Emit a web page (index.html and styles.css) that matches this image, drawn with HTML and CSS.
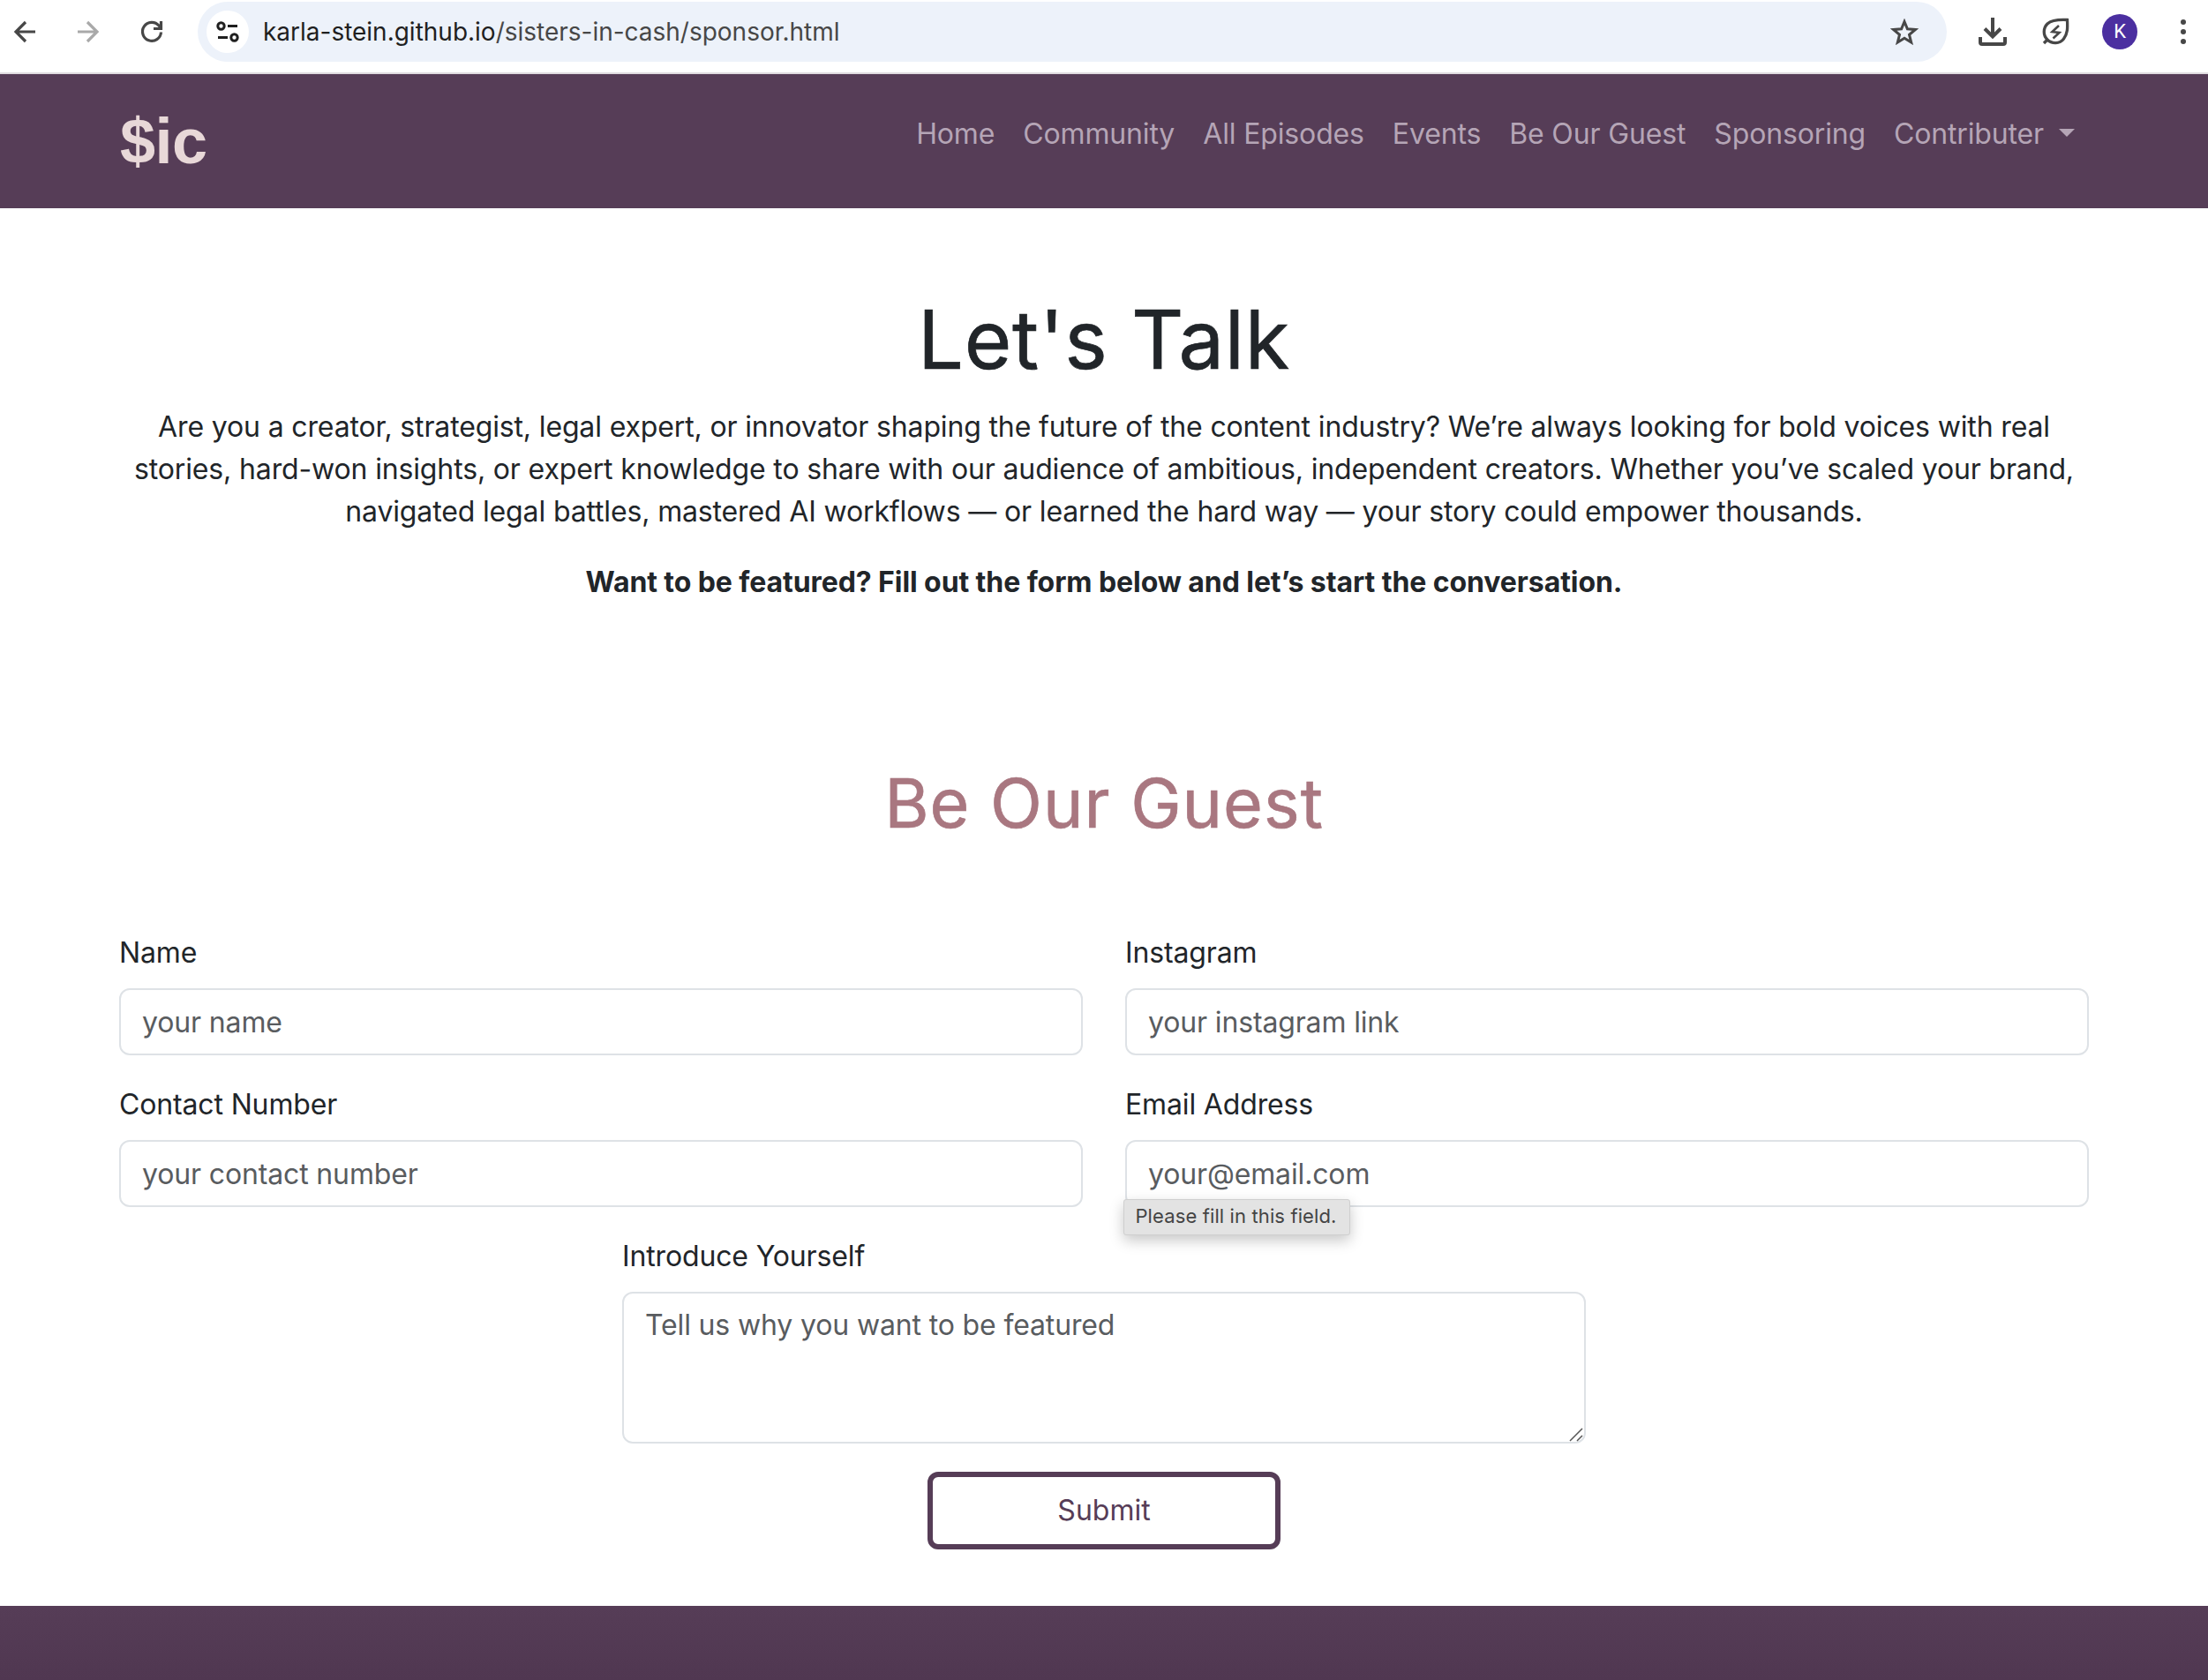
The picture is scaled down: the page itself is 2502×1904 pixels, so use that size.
FILE: index.html
```html
<!DOCTYPE html>
<html lang="en">
<head>
<meta charset="utf-8">
<title>Let's Talk</title>
<link rel="stylesheet" href="styles.css">
</head>
<body>
<div class="toolbar">
  <svg class="icon icon-back" viewBox="0 0 24 24"><path d="M24 12H2M13 1L2 12l11 11"/></svg>
  <svg class="icon icon-forward" viewBox="0 0 24 24"><path d="M0 12h22M11 1l11 11-11 11"/></svg>
  <svg class="icon icon-reload" viewBox="0 0 24 24"><path d="M22.500 12.500A10.500 10.500 0 1 1 20 5l2.500 3M22.500 0v8.500H14"/></svg>
  <div class="address">
    <div class="site-info">
      <svg viewBox="0 0 26 24"><circle cx="5.500" cy="5.500" r="3.700"/><path d="M13 5.500h11M2 18.500h11"/><circle cx="20.500" cy="18.500" r="3.700"/></svg>
    </div>
    <div class="url">karla-stein.github.io<span class="path">/sisters-in-cash/sponsor.html</span></div>
    <svg class="star" viewBox="0 0 32 30"><path d="M16 3.500l3.400 8.300 9 .7-6.900 5.800 2.200 8.700L16 22.300 8.300 27l2.200-8.700-6.900-5.800 9-.7z"/></svg>
  </div>
  <svg class="icon icon-download" viewBox="0 0 32 32"><path d="M16 0v21M7 12.500l9 9 9-9M2 22v6a2 2 0 0 0 2 2h24a2 2 0 0 0 2-2v-6"/></svg>
  <svg class="icon icon-leaf" viewBox="0 0 32 32"><path d="M2 29l4-4M6 25C1 20 1 12 6 7c5-4.500 13-5 22.500-4.500C29 12 29 18 24.500 24S11 30 6 25z"/><path class="bolt" d="M19 9l-7.500 7 8 1-7 6.500"/></svg>
  <div class="avatar">K</div>
  <svg class="dots" viewBox="0 0 6 28"><circle cx="3" cy="3" r="3"/><circle cx="3" cy="14" r="3"/><circle cx="3" cy="25" r="3"/></svg>
</div>
<header class="navbar">
  <div class="container navbar-inner">
    <a class="brand">$ic</a>
    <nav class="nav">
      <a>Home</a><a>Community</a><a>All Episodes</a><a>Events</a><a>Be Our Guest</a><a>Sponsoring</a><a class="dropdown">Contributer</a>
    </nav>
  </div>
</header>
<main class="container">
  <section class="intro">
    <h1>Let's Talk</h1>
    <p>Are you a creator, strategist, legal expert, or innovator shaping the future of the content industry? We’re always looking for bold voices with real<br>stories, hard-won insights, or expert knowledge to share with our audience of ambitious, independent creators. Whether you’ve scaled your brand,<br>navigated legal battles, mastered AI workflows — or learned the hard way — your story could empower thousands.</p>
    <p class="callout">Want to be featured? Fill out the form below and let’s start the conversation.</p>
  </section>
  <h2>Be Our Guest</h2>
  <form class="form">
    <div class="field"><label>Name</label><input type="text" placeholder="your name"></div>
    <div class="field"><label>Instagram</label><input type="text" placeholder="your instagram link"></div>
    <div class="field"><label>Contact Number</label><input type="text" placeholder="your contact number"></div>
    <div class="field"><label>Email Address</label><input type="text" placeholder="your@email.com"><div class="tooltip">Please fill in this field.</div></div>
    <div class="field field-center"><label>Introduce Yourself</label>
      <div class="textarea">Tell us why you want to be featured
        <svg class="grip" viewBox="0 0 16 16"><path d="M1 15L15 1M9 15l6-6"/></svg>
      </div>
    </div>
    <button class="submit" type="button">Submit</button>
  </form>
</main>
<footer class="footer"></footer>
</body>
</html>
```
FILE: styles.css
```css
* { box-sizing: border-box; }
body {
  margin: 0;
  height: 1904px;
  overflow: hidden;
  display: flex;
  flex-direction: column;
  background: #fff;
  color: #212529;
  font: 32px/48px Inter, "Liberation Sans", sans-serif;
  letter-spacing: -0.145px;
}
h1, h2, p { margin: 0; font-weight: 400; }

.toolbar {
  display: flex;
  align-items: center;
  height: 84px;
  padding: 0 25px 10px 16px;
  border-bottom: 2px solid #e0dce0;
  flex: none;
}
.icon {
  flex: none;
  width: 24px;
  height: 24px;
  fill: none;
  stroke: #474747;
  stroke-width: 3.2;
  overflow: visible;
}
.icon-forward { margin-left: 48px; stroke: #a9a9a9; }
.icon-reload { margin-left: 48px; }
.address {
  display: flex;
  align-items: center;
  flex: none;
  width: 1982px;
  height: 68px;
  margin: 0 0 0 40px;
  padding: 0 32px 0 10px;
  border-radius: 34px;
  background: #edf2fa;
}
.site-info {
  display: flex;
  align-items: center;
  justify-content: center;
  width: 48px;
  height: 48px;
  border-radius: 50%;
  background: #fff;
}
.site-info svg { width: 26px; height: 24px; fill: none; stroke: #1f1f1f; stroke-width: 3; }
.url {
  flex: 1;
  margin-left: 16px;
  font-size: 28px;
  letter-spacing: -0.01px;
  color: #1f1f1f;
}
.path { color: #474747; }
.star { width: 32px; height: 30px; fill: none; stroke: #474747; stroke-width: 3; }
.icon-download { width: 32px; height: 32px; margin-left: 36px; stroke-width: 4; }
.icon-leaf { width: 32px; height: 32px; margin-left: 40px; stroke-width: 3.3; }
.icon-leaf .bolt { stroke-width: 2.6; }
.avatar {
  width: 40px;
  height: 40px;
  margin-left: 36px;
  border-radius: 50%;
  background: #4b2fa0;
  color: #fff;
  font: 22px/40px Roboto, sans-serif;
  text-align: center;
}
.dots { width: 6px; height: 28px; margin-left: 49px; fill: #474747; }

.container { width: 2280px; margin: 0 auto; padding: 0 24px; flex: none; }
.navbar { flex: none; height: 152px; background: #563d57; }
.navbar-inner { display: flex; justify-content: space-between; }
.brand {
  padding: 33px 0 0 1px;
  font: bold 72px/86px "Liberation Sans", sans-serif;
  letter-spacing: -0.5px;
  color: #e8d8d8;
}
.nav { display: flex; padding-top: 44px; color: #b5a5b6; }
.nav a { padding: 0 16px; }
.dropdown::after {
  content: "";
  display: inline-block;
  margin-left: 17px;
  vertical-align: 8px;
  border: 9px solid transparent;
  border-top-color: currentColor;
  border-bottom: 0;
}

.intro { padding-top: 92px; text-align: center; }
h1, h2 { -webkit-text-stroke: 0.7px currentColor; }
h1 { font-size: 92px; line-height: 114px; margin-bottom: 18px; letter-spacing: 0.7px; }
.callout { margin-top: 32px; font-weight: 700; letter-spacing: -0.08px; }
h2 {
  margin-top: 178px;
  font-size: 77px;
  line-height: 96px;
  letter-spacing: 1px;
  text-align: center;
  color: #a97780;
}
.form {
  display: grid;
  grid-template-columns: 1092px 1092px;
  gap: 32px 48px;
  margin-top: 98px;
}
.field { position: relative; display: flex; flex-direction: column; gap: 16px; }
input, .textarea {
  width: 100%;
  height: 76px;
  padding: 12px 24px;
  border: 2px solid #dee2e6;
  border-radius: 12px;
  background: #fff;
  color: #595c5f;
  font: inherit;
  letter-spacing: inherit;
}
input::placeholder { color: #595c5f; opacity: 1; }
.textarea { position: relative; height: 172px; }
.grip {
  position: absolute;
  right: 1px;
  bottom: 0;
  width: 16px;
  height: 16px;
  fill: none;
  stroke: #555;
  stroke-width: 1.5;
}
.field-center { grid-column: 1 / -1; justify-self: center; width: 1092px; }
.submit {
  grid-column: 1 / -1;
  justify-self: center;
  width: 400px;
  height: 88px;
  padding: 0;
  border: 6px solid #563d57;
  border-radius: 12px;
  background: #fff;
  color: #563d57;
  font: inherit;
}
.tooltip {
  position: absolute;
  left: -2px;
  top: 131px;
  z-index: 1;
  width: 257px;
  height: 41px;
  padding-right: 2px;
  border: 1px solid #cfcfcf;
  border-radius: 3px;
  background: #e3e3e3;
  box-shadow: 0 6px 16px rgba(0, 0, 0, 0.22);
  color: #444;
  font-size: 22px;
  line-height: 37px;
  letter-spacing: 0.12px;
  text-align: center;
  white-space: nowrap;
}
.footer { height: 84px; margin-top: 64px; flex: none; background: linear-gradient(#563d57, #503751); }
```
